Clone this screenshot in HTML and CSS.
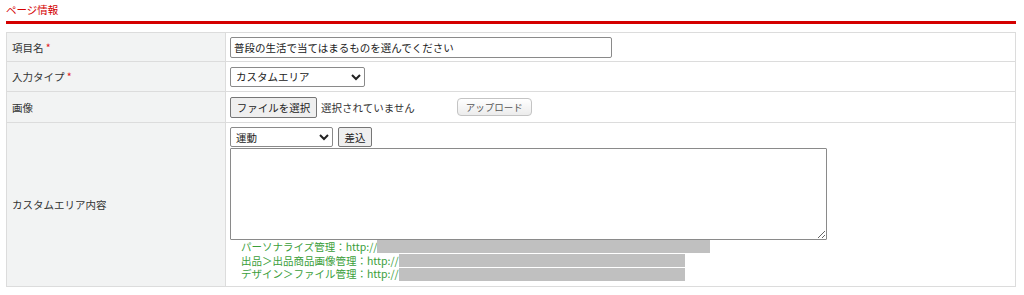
FILE: index.html
```html
<!DOCTYPE html>
<html lang="ja">
<head>
<meta charset="utf-8">
<link rel="stylesheet" href="styles.css">
</head>
<body>
<div class="page">
  <h2 class="sec-title">ページ情報</h2>
  <table class="form">
    <tr class="r1">
      <th>項目名 <span class="req">*</span></th>
      <td><input class="txt" type="text" value="普段の生活で当てはまるものを選んでください"></td>
    </tr>
    <tr class="r2">
      <th>入力タイプ <span class="req">*</span></th>
      <td><select class="sel-type"><option>カスタムエリア</option></select></td>
    </tr>
    <tr class="r3">
      <th>画像</th>
      <td>
        <div class="file-row">
          <button class="btn file-btn" type="button">ファイルを選択</button>
          <span class="nofile">選択されていません</span>
          <button class="upload" type="button">アップロード</button>
        </div>
      </td>
    </tr>
    <tr class="r4">
      <th>カスタムエリア内容</th>
      <td>
        <div class="insert-row">
          <select class="sel-cat"><option>運動</option></select>
          <button class="btn ins-btn" type="button">差込</button>
        </div>
        <textarea class="area"></textarea>
        <ul class="links">
          <li>パーソナライズ管理：http://<span class="mask m1"></span></li>
          <li>出品＞出品商品画像管理：http://<span class="mask m2"></span></li>
          <li>デザイン＞ファイル管理：http://<span class="mask m2"></span></li>
        </ul>
      </td>
    </tr>
  </table>
</div>
</body>
</html>
```

FILE: styles.css
```css
* { box-sizing: border-box; }
html, body { margin: 0; padding: 0; background: #fff; }
body {
  font-family: "Noto Sans CJK JP", "Noto Sans", sans-serif;
  font-size: 10.5px;
  color: #333;
}
.page { padding: 3px 8px 0 6px; }
.sec-title {
  margin: 0;
  font-size: 10.5px;
  font-weight: normal;
  color: #d40000;
  line-height: 13px;
  padding-bottom: 5px;
  border-bottom: 3px solid #d40000;
}
.form {
  margin-top: 8px;
  width: 1010px;
  border-collapse: collapse;
  border: 1px solid #dcdcdc;
}
.form th, .form td {
  border: 1px solid #dcdcdc;
  padding: 0 4px;
  vertical-align: middle;
  text-align: left;
}
.form th {
  width: 219px;
  background: #f2f3f3;
  font-weight: normal;
  padding-left: 5px;
  color: #333;
}
.req { color: #e02020; }
.r1 { height: 29px; }
.r2 { height: 30px; }
.r3 { height: 31px; }
.r4 { height: 164px; }
.r4 td { padding-top: 4px; padding-bottom: 5px; }
.txt {
  display: block;
  width: 382px;
  height: 21px;
  border: 1px solid #8a8a8a;
  border-radius: 2px;
  padding: 0 3px;
  font: inherit;
  color: #222;
}
select {
  font: inherit;
  color: #222;
  border: 1px solid #8a8a8a;
  border-radius: 2px;
  background: #fff;
  height: 20px;
  padding: 0 0 0 1px;
}
.sel-type { display: block; width: 135px; }
.file-row { display: flex; align-items: center; }
.btn {
  font: inherit;
  color: #222;
  background: #efefef;
  border: 1px solid #767676;
  border-radius: 2px;
  padding: 0 4px;
  height: 21px;
  white-space: nowrap;
}
.file-btn { width: 87px; padding: 0; }
.nofile { margin-left: 4px; color: #333; white-space: nowrap; }
.upload {
  margin-left: 42px;
  width: 75px;
  height: 18px;
  font: inherit;
  font-size: 9.5px;
  color: #555;
  border: 1px solid #c4c4c4;
  border-radius: 4px;
  background: linear-gradient(#ffffff, #ececec);
  padding: 0;
  white-space: nowrap;
}
.insert-row { display: flex; align-items: center; gap: 5px; }
.sel-cat { width: 103px; }
.ins-btn { width: 34px; height: 20px; padding: 0; }
.area {
  display: block;
  margin-top: 1px;
  width: 597px;
  height: 92px;
  border: 1px solid #8a8a8a;
  border-radius: 1px;
  resize: both;
}
.links {
  list-style: none;
  margin: 0;
  padding: 0 0 0 11px;
  font-size: 10.5px;
  line-height: 13.7px;
  color: #3a9e3a;
}
.links li { display: flex; align-items: center; white-space: nowrap; }
.mask { display: inline-block; background: #c0c0c0; height: 13px; }
.m1 { width: 333px; }
.m2 { width: 286px; }
```
